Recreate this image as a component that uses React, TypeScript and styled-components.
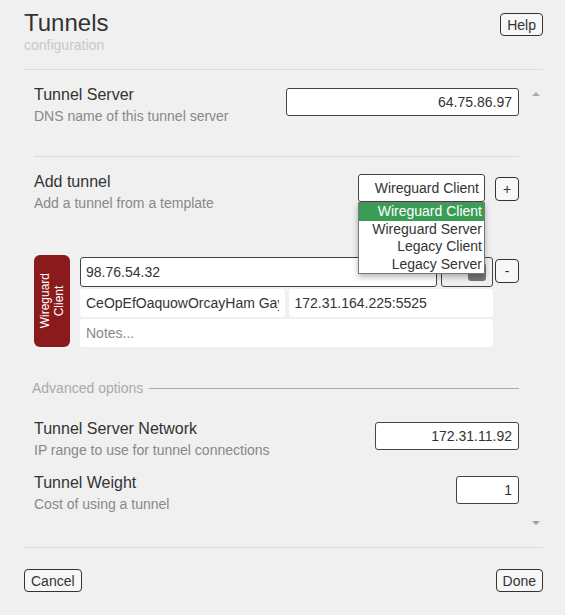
import React from "react";
import styled, { createGlobalStyle } from "styled-components";

const FONT = `"Liberation Sans", Arial, sans-serif`;

const GlobalStyle = createGlobalStyle`
  html, body { margin: 0; padding: 0; background: #f0f0f0; }
  body { font-family: ${FONT}; color: #333; }
  * { box-sizing: border-box; }
`;

const Page = styled.div`
  width: 565px;
  height: 615px;
  padding: 0 22px 0 24px;
  display: flex;
  flex-direction: column;
`;

const Header = styled.header`
  display: flex;
  justify-content: space-between;
  align-items: flex-start;
  padding: 9px 0 16px;
  border-bottom: 1px solid #dcdcdc;
`;

const Title = styled.h1`
  margin: 0;
  font-size: 24px;
  line-height: 28px;
  font-weight: 400;
  color: #333;
`;

const Subtitle = styled.div`
  font-size: 14px;
  line-height: 16px;
  color: #c8c8c8;
`;

const Button = styled.button<{ $mt?: number }>`
  height: 23px;
  padding: 0 6px;
  margin-top: ${(p) => p.$mt ?? 0}px;
  border: 1px solid #333;
  border-radius: 4px;
  background: #f7f7f7;
  font: 14px ${FONT};
  color: #333;
`;

const SquareButton = styled.button<{ $mt?: number }>`
  width: 24px;
  height: 24px;
  padding: 0;
  flex: none;
  margin-top: ${(p) => p.$mt ?? 0}px;
  border: 1px solid #333;
  border-radius: 4px;
  background: #f7f7f7;
  font: 14px ${FONT};
  color: #333;
`;

const Body = styled.div`
  display: flex;
  height: 478px;
  border-bottom: 1px solid #dcdcdc;
`;

const Content = styled.div`
  flex: 1;
  padding: 0 10px;
  display: flex;
  flex-direction: column;
`;

const Scrollbar = styled.div`
  width: 14px;
  display: flex;
  flex-direction: column;
  justify-content: space-between;
  align-items: center;
  padding: 22px 0;
`;

const Arrow = styled.div<{ $dir: "up" | "down" }>`
  width: 0;
  height: 0;
  border-left: 4px solid transparent;
  border-right: 4px solid transparent;
  ${(p) =>
    p.$dir === "up"
      ? "border-bottom: 4px solid #a8a8a8;"
      : "border-top: 4px solid #a0a0a0;"}
`;

const Section = styled.section<{ $pt: number; $pb: number; $divider?: boolean }>`
  padding: ${(p) => p.$pt}px 0 ${(p) => p.$pb}px;
  border-bottom: ${(p) => (p.$divider ? "1px solid #dcdcdc" : "none")};
`;

const FieldRow = styled.div<{ $mt?: number }>`
  display: flex;
  justify-content: space-between;
  align-items: flex-start;
  margin-top: ${(p) => p.$mt ?? 0}px;
`;

const LabelBlock = styled.div`
  display: flex;
  flex-direction: column;
`;

const FieldTitle = styled.div`
  font-size: 16px;
  line-height: 20px;
  color: #333;
`;

const FieldDesc = styled.div`
  font-size: 14px;
  line-height: 20px;
  margin-top: 1px;
  color: #888;
`;

const TextInput = styled.input<{ $w: number }>`
  width: ${(p) => p.$w}px;
  height: 28px;
  margin: 3px 0 0;
  padding: 0 6px;
  border: 1px solid #444;
  border-radius: 3px;
  background: #fff;
  text-align: right;
  font: 14px ${FONT};
  color: #333;
  outline: none;
`;

const Controls = styled.div`
  display: flex;
  gap: 10px;
  align-items: flex-start;
`;

const SelectWrap = styled.div`
  position: relative;
  margin-top: 2px;
`;

const SelectBox = styled.div`
  width: 127px;
  height: 28px;
  padding: 0 5px;
  border: 1px solid #444;
  border-radius: 3px;
  background: #fff;
  font-size: 14px;
  line-height: 26px;
  text-align: right;
  color: #333;
`;

const Dropdown = styled.ul`
  position: absolute;
  top: 100%;
  left: 0;
  width: 127px;
  margin: 0;
  padding: 0;
  list-style: none;
  background: #fff;
  border: 1px solid #777;
  box-shadow: 0 3px 6px rgba(0, 0, 0, 0.28);
  z-index: 10;
`;

const Option = styled.li<{ $active?: boolean }>`
  height: 17.5px;
  line-height: 17.5px;
  padding-right: 2px;
  text-align: right;
  font-size: 14px;
  color: ${(p) => (p.$active ? "#fff" : "#333")};
  background: ${(p) => (p.$active ? "#3a9d56" : "transparent")};
`;

const Card = styled.div`
  display: flex;
  gap: 10px;
  margin-top: 42px;
`;

const TypeBadge = styled.div`
  width: 36px;
  flex: none;
  background: #8b1a1c;
  border-radius: 6px;
  display: flex;
  align-items: center;
  justify-content: center;
`;

const BadgeText = styled.span`
  writing-mode: vertical-rl;
  transform: rotate(180deg);
  color: #fff;
  font-size: 12px;
  line-height: 14px;
  text-align: center;
`;

const CardMain = styled.div`
  flex: 1;
  display: flex;
  gap: 2px;
  align-items: flex-start;
`;

const CardFields = styled.div`
  flex: 1;
  display: flex;
  flex-direction: column;
  gap: 2px;
  padding-top: 2px;
`;

const CardRow = styled.div`
  display: flex;
  gap: 4px;
`;

const CardInput = styled.input<{ $bordered?: boolean }>`
  flex: 1;
  min-width: 0;
  height: ${(p) => (p.$bordered ? 30 : 28)}px;
  margin: 0;
  padding: 0 ${(p) => (p.$bordered ? 5 : 6)}px;
  border: ${(p) => (p.$bordered ? "1px solid #444" : "none")};
  border-radius: 3px;
  background: #fff;
  font: 14px ${FONT};
  color: #333;
  outline: none;
  &::placeholder {
    color: #888;
  }
`;

const ToggleBox = styled.div`
  width: 52px;
  height: 30px;
  flex: none;
  border: 1px solid #444;
  border-radius: 3px;
  display: flex;
  align-items: center;
  justify-content: flex-end;
  padding-right: 6px;
`;

const ToggleKnob = styled.div`
  width: 18px;
  height: 18px;
  border-radius: 3px;
  background: #777;
`;

const AdvancedHeader = styled.div`
  display: flex;
  align-items: center;
  gap: 6px;
  margin: 31px 0 0 -2px;
  font-size: 14px;
  line-height: 20px;
  color: #aaa;
`;

const AdvancedLine = styled.div`
  flex: 1;
  height: 1px;
  background: #a8a8a8;
`;

const Footer = styled.footer`
  display: flex;
  justify-content: space-between;
  padding-top: 21px;
`;

export default function App() {
  return (
    <>
      <GlobalStyle />
      <Page>
        <Header>
          <div>
            <Title>Tunnels</Title>
            <Subtitle>configuration</Subtitle>
          </div>
          <Button $mt={4}>Help</Button>
        </Header>

        <Body>
          <Content>
            <Section $pt={15} $pb={30} $divider>
              <FieldRow>
                <LabelBlock>
                  <FieldTitle>Tunnel Server</FieldTitle>
                  <FieldDesc>DNS name of this tunnel server</FieldDesc>
                </LabelBlock>
                <TextInput $w={233} readOnly value="64.75.86.97" />
              </FieldRow>
            </Section>

            <Section $pt={15} $pb={0}>
              <FieldRow>
                <LabelBlock>
                  <FieldTitle>Add tunnel</FieldTitle>
                  <FieldDesc>Add a tunnel from a template</FieldDesc>
                </LabelBlock>
                <Controls>
                  <SelectWrap>
                    <SelectBox>Wireguard Client</SelectBox>
                    <Dropdown>
                      <Option $active>Wireguard Client</Option>
                      <Option>Wireguard Server</Option>
                      <Option>Legacy Client</Option>
                      <Option>Legacy Server</Option>
                    </Dropdown>
                  </SelectWrap>
                  <SquareButton $mt={5}>+</SquareButton>
                </Controls>
              </FieldRow>

              <Card>
                <TypeBadge>
                  <BadgeText>
                    Wireguard
                    <br />
                    Client
                  </BadgeText>
                </TypeBadge>
                <CardMain>
                  <CardFields>
                    <CardRow>
                      <CardInput $bordered readOnly value="98.76.54.32" />
                      <ToggleBox>
                        <ToggleKnob />
                      </ToggleBox>
                    </CardRow>
                    <CardRow>
                      <CardInput readOnly value="CeOpEfOaquowOrcayHam GayVobOkIt=" />
                      <CardInput readOnly value="172.31.164.225:5525" />
                    </CardRow>
                    <CardRow>
                      <CardInput readOnly placeholder="Notes..." />
                    </CardRow>
                  </CardFields>
                  <SquareButton $mt={4}>-</SquareButton>
                </CardMain>
              </Card>

              <AdvancedHeader>
                <span>Advanced options</span>
                <AdvancedLine />
              </AdvancedHeader>

              <FieldRow $mt={21}>
                <LabelBlock>
                  <FieldTitle>Tunnel Server Network</FieldTitle>
                  <FieldDesc>IP range to use for tunnel connections</FieldDesc>
                </LabelBlock>
                <TextInput $w={144} readOnly value="172.31.11.92" />
              </FieldRow>

              <FieldRow $mt={13}>
                <LabelBlock>
                  <FieldTitle>Tunnel Weight</FieldTitle>
                  <FieldDesc>Cost of using a tunnel</FieldDesc>
                </LabelBlock>
                <TextInput $w={63} readOnly value="1" />
              </FieldRow>
            </Section>
          </Content>
          <Scrollbar>
            <Arrow $dir="up" />
            <Arrow $dir="down" />
          </Scrollbar>
        </Body>

        <Footer>
          <Button>Cancel</Button>
          <Button>Done</Button>
        </Footer>
      </Page>
    </>
  );
}
